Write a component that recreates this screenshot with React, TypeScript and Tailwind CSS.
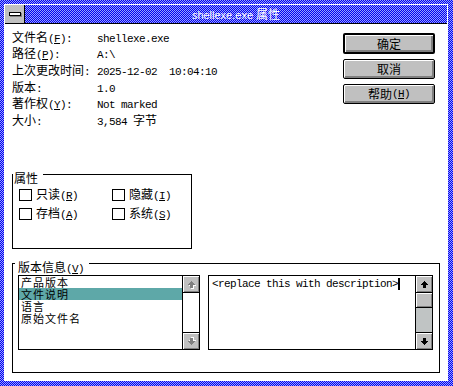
import React from "react";

const CJK = "font-['Noto_Sans_CJK_SC',sans-serif]";
const MONO = "font-['Liberation_Mono',monospace] text-[11px] tracking-[-0.6px]";
const DITHER =
  "bg-[repeating-conic-gradient(#0000f0_0%_25%,#9aa2ff_0%_50%)] bg-[length:2px_2px]";

function Mn({ k, colon }: { k: string; colon?: boolean }) {
  return (
    <span className={MONO}>
      (<span className="underline underline-offset-[1px]">{k}</span>){colon ? ":" : ""}
    </span>
  );
}

function Arrow({ down, disabled }: { down?: boolean; disabled?: boolean }) {
  const pts =
    "3,0 4,0 4,1 5,1 5,2 6,2 6,3 7,3 7,4 5,4 5,7 2,7 2,4 0,4 0,3 1,3 1,2 2,2 2,1 3,1";
  return (
    <svg
      width="9"
      height="9"
      viewBox="0 0 9 9"
      shapeRendering="crispEdges"
      style={down ? { transform: "scaleY(-1)" } : undefined}
    >
      {disabled ? (
        <>
          <polygon points={pts} fill="#ffffff" transform="translate(2,2)" />
          <polygon points={pts} fill="#808080" transform="translate(1,1)" />
        </>
      ) : (
        <polygon points={pts} fill="#000000" transform="translate(1,1)" />
      )}
    </svg>
  );
}

function ScrollBtn({ down, disabled }: { down?: boolean; disabled?: boolean }) {
  return (
    <div
      className={`w-full shrink-0 bg-[#c0c0c0] shadow-[inset_1px_1px_0_#ffffff,inset_-1px_-1px_0_#808080] flex items-center justify-center ${
        down ? "border-t border-black h-[17px]" : "border-b border-black h-[17px]"
      }`}
    >
      <Arrow down={down} disabled={disabled} />
    </div>
  );
}

function Btn({ children, def }: { children: React.ReactNode; def?: boolean }) {
  return (
    <div
      className={`w-[92px] ${
        def ? "h-[21px] border-2" : "h-[20px] border"
      } border-black rounded-[2px] bg-[#c0c0c0] shadow-[inset_1px_1px_0_#ffffff,inset_-2px_-2px_0_#808080] flex items-center justify-center text-[12px] leading-none ${CJK}`}
    >
      {children}
    </div>
  );
}

function Check({ label, k }: { label: string; k: string }) {
  return (
    <div className="flex items-center h-[12px]">
      <div className="w-[13px] h-[12px] border border-black bg-white shrink-0" />
      <span className={`ml-[4px] text-[12px] leading-[12px] ${CJK}`}>
        {label}
        <Mn k={k} />
      </span>
    </div>
  );
}

const rows: { label: string; k?: string; value: React.ReactNode }[] = [
  { label: "文件名", k: "F", value: <span className={MONO}>shellexe.exe</span> },
  { label: "路径", k: "P", value: <span className={MONO}>A:\</span> },
  {
    label: "上次更改时间",
    value: <span className={`${MONO} whitespace-pre`}>2025-12-02  10:04:10</span>,
  },
  { label: "版本", value: <span className={MONO}>1.0</span> },
  { label: "著作权", k: "Y", value: <span className={MONO}>Not marked</span> },
  {
    label: "大小",
    value: (
      <>
        <span className={`${MONO} whitespace-pre`}>3,584 </span>
        <span className={CJK}>字节</span>
      </>
    ),
  },
];

const items = ["产品版本", "文件说明", "语言", "原始文件名"];

export default function App() {
  return (
    <div className={`w-[453px] h-[386px] pt-[4px] pl-[4px] pr-[5px] pb-[5px] ${DITHER}`}>
      <div className="w-full h-full border border-white flex flex-col bg-white text-black">
        {/* Title bar */}
        <div className="flex h-[19px] border-b border-black shrink-0">
          <div className="w-[20px] h-full bg-[#c0c0c0] border-r border-black flex items-center justify-center">
            <div className="w-[12px] h-[4px] border border-black bg-white shadow-[1px_1px_0_#808080]" />
          </div>
          <div className={`flex-1 flex items-center justify-center ${DITHER}`}>
            <span className="text-white text-[11px] leading-none font-['Liberation_Sans',sans-serif]">
              shellexe.exe <span className={`text-[12px] ${CJK}`}>属性</span>
            </span>
          </div>
        </div>

        {/* Client */}
        <div className="flex-1 flex flex-col">
          <div className="flex justify-between h-[150px] shrink-0">
            <div className="pl-[7px] pt-[5px] flex flex-col">
              {rows.map((r) => (
                <div key={r.label} className="flex h-[16.67px] items-center text-[12px]">
                  <div className={`w-[85px] shrink-0 ${CJK}`}>
                    {r.label}
                    {r.k ? <Mn k={r.k} colon /> : <span className={MONO}>:</span>}
                  </div>
                  <div className={CJK}>{r.value}</div>
                </div>
              ))}
            </div>
            <div className="pt-[9px] pr-[12px] flex flex-col gap-[5px]">
              <Btn def>确定</Btn>
              <Btn>取消</Btn>
              <Btn>
                帮助
                <Mn k="H" />
              </Btn>
            </div>
          </div>

          {/* Attributes group */}
          <div className="relative ml-[7px] w-[180px] h-[75px] border border-black shrink-0">
            <span
              className={`absolute left-[0px] top-[-3px] bg-white pl-[1px] pr-[5px] text-[12px] leading-[12px] ${CJK}`}
            >
              属性
            </span>
            <div className="pt-[14px] pl-[6px] grid grid-cols-[93px_auto] gap-y-[7px]">
              <Check label="只读" k="R" />
              <Check label="隐藏" k="I" />
              <Check label="存档" k="A" />
              <Check label="系统" k="S" />
            </div>
          </div>

          {/* Version group */}
          <div className="relative mt-[14px] ml-[7px] w-[428px] h-[110px] border border-black shrink-0">
            <span
              className={`absolute left-[2px] top-[-3px] bg-white pl-[3px] pr-[5px] text-[12px] leading-[12px] ${CJK}`}
            >
              版本信息
              <Mn k="V" />
            </span>
            <div className="pt-[11px] pl-[5px] flex gap-[8px]">
              {/* list box */}
              <div className="w-[182px] h-[75px] border border-black flex">
                <div className="flex-1 flex flex-col">
                  {items.map((it, i) => (
                    <div
                      key={it}
                      className={`h-[12px] leading-[12px] text-[11px] tracking-[1px] pl-[2px] ${CJK} ${
                        i === 1 ? "bg-[#5ea8a8]" : ""
                      }`}
                    >
                      {it}
                    </div>
                  ))}
                </div>
                <div className="w-[17px] border-l border-black flex flex-col">
                  <ScrollBtn disabled />
                  <div className="flex-1 bg-white" />
                  <ScrollBtn down disabled />
                </div>
              </div>
              {/* description edit */}
              <div className="w-[225px] h-[75px] border border-black flex">
                <div className="flex-1 pl-[3px] pt-[2px]">
                  <div className="flex items-center h-[12px]">
                    <span className={`${MONO} leading-[12px]`}>&lt;replace this with description&gt;</span>
                    <span className="inline-block w-[2px] h-[12px] bg-black" />
                  </div>
                </div>
                <div className="w-[17px] border-l border-black flex flex-col">
                  <ScrollBtn />
                  <div className="h-[15px] shrink-0 bg-[#c0c0c0] border-b border-black shadow-[inset_1px_1px_0_#ffffff,inset_-1px_-1px_0_#808080]" />
                  <div className="flex-1 bg-[#c0c4c4]" />
                  <ScrollBtn down />
                </div>
              </div>
            </div>
          </div>
        </div>
      </div>
    </div>
  );
}
